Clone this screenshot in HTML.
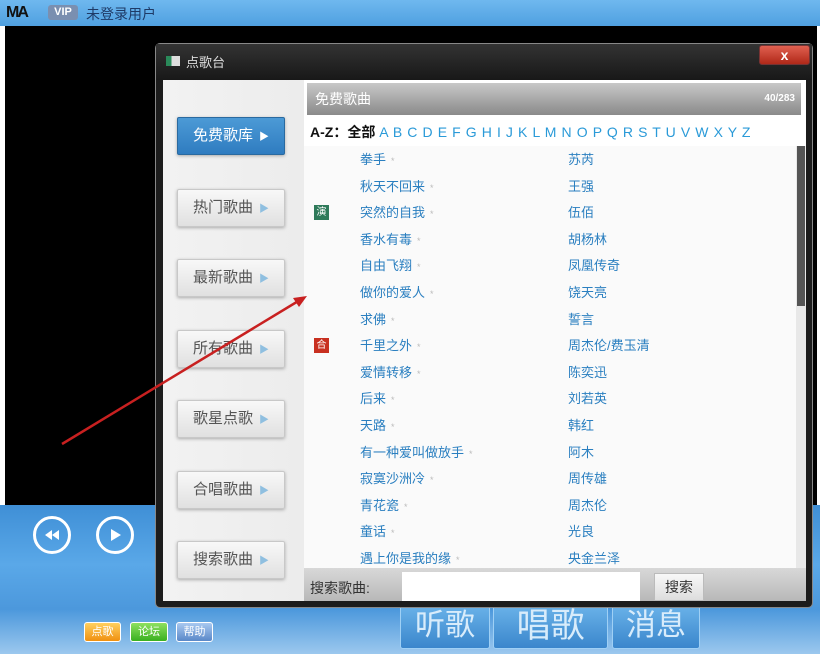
<!DOCTYPE html>
<html><head><meta charset="utf-8"><style>
*{margin:0;padding:0;box-sizing:border-box}
body{width:820px;height:654px;overflow:hidden;background:#fff;position:relative;font-family:"Liberation Sans","Noto Sans CJK SC",sans-serif}
.abs{position:absolute}
.top{left:0;top:0;width:820px;height:26px;background:linear-gradient(#6fb8ef,#4fa0e0)}
.black{left:5px;top:26px;width:812px;height:482px;background:#000}
.bot{left:0;top:505px;width:820px;height:149px;background:linear-gradient(#3f8fd6 0%,#5aa8e8 40%,#4c98dc 70%,#9cc8ee 100%)}
.dlg{left:155px;top:43px;width:658px;height:565px;background:#1c1c1c;border:1px solid #888;border-radius:5px}
.title{left:0;top:0;width:656px;height:36px;background:linear-gradient(#333,#181818)}
.content{left:7px;top:36px;width:643px;height:521px;background:#f5f5f5}
.btn{left:14px;width:108px;height:38px;background:linear-gradient(#f8f8f8,#e0e0e0);border:1px solid #c8c8c8;box-shadow:0 1px 3px #aaa;border-radius:2px;color:#555;font-size:15px;line-height:36px;text-align:center}
.btn span{color:#8fbfe0;font-size:10px;margin-left:6px}
.btn.on{background:linear-gradient(#4c9ad6,#2f7cc0);color:#fff;border-color:#2a6aa0}
.btn.on span{color:#fff}
.row{left:0;width:492px;height:27px;font-size:13px;color:#2a7fc0;line-height:27px}
.row .a{position:absolute;left:56px}
.row .b{position:absolute;left:264px}
.row i{color:#bbb;font-style:normal;font-size:9px;margin-left:5px}
.bb{top:603px;height:46px;background:linear-gradient(#6cb4ea,#3a86cc);border:1px solid #9fd0f5;border-radius:3px;color:#d8ecfb;font-size:30px;text-align:center;line-height:44px}
.circ{width:38px;height:38px;border:3px solid #fff;border-radius:50%;top:516px}
</style></head><body>
<div class="abs top"></div>
<div class="abs" style="left:6px;top:4px;font-size:16px;font-weight:bold;color:#111;letter-spacing:-2px">MA</div>
<div class="abs" style="left:48px;top:5px;width:30px;height:15px;background:#7a8fb0;border-radius:3px;color:#fff;font-size:11px;line-height:15px;text-align:center;font-weight:bold">VIP</div>
<div class="abs" style="left:86px;top:4px;font-size:14px;color:#1e3a66">未登录用户</div>
<div class="abs black"></div>
<div class="abs bot"></div>
<div class="abs circ" style="left:33px"><svg width="32" height="32" viewBox="0 0 32 32"><path d="M9 16l7-5v10zM16 16l7-5v10z" fill="#fff"/></svg></div>
<div class="abs circ" style="left:96px"><svg width="32" height="32" viewBox="0 0 32 32"><path d="M12 10l10 6-10 6z" fill="#fff"/></svg></div>
<div class="abs" style="left:84px;top:622px;width:37px;height:20px;background:linear-gradient(#ffd060,#f09010);border:1px solid #fff;border-radius:3px;color:#fff;font-size:11px;text-align:center;line-height:18px">点歌</div>
<div class="abs" style="left:130px;top:622px;width:38px;height:20px;background:linear-gradient(#8fe060,#3ab020);border:1px solid #fff;border-radius:3px;color:#fff;font-size:11px;text-align:center;line-height:18px">论坛</div>
<div class="abs" style="left:176px;top:622px;width:37px;height:20px;background:linear-gradient(#a8c8f0,#5a88c8);border:1px solid #fff;border-radius:3px;color:#fff;font-size:11px;text-align:center;line-height:18px">帮助</div>
<div class="abs bb" style="left:400px;width:90px">听歌</div>
<div class="abs bb" style="left:493px;width:115px;font-size:34px">唱歌</div>
<div class="abs bb" style="left:612px;width:88px">消息</div>
<div class="abs dlg">
 <div class="abs title"></div>
 <div class="abs" style="left:10px;top:12px;width:14px;height:10px;background:linear-gradient(90deg,#2a8a5a 40%,#ddd 40%)"></div>
 <div class="abs" style="left:30px;top:8px;color:#ddd;font-size:13px">点歌台</div>
 <div class="abs" style="left:603px;top:1px;width:51px;height:20px;background:linear-gradient(#e06050,#b02818);border:1px solid #733;border-radius:3px;color:#fff;text-align:center;font-size:14px;font-weight:bold;line-height:18px">x</div>
 <div class="abs content">
  <div class="abs" style="left:0;top:0;width:141px;height:521px;background:linear-gradient(90deg,#f2f2f2,#ececec)"></div>
  <div class="abs btn on" style="top:37px">免费歌库<span>▶</span></div>
  <div class="abs btn" style="top:109px">热门歌曲<span>▶</span></div>
  <div class="abs btn" style="top:179px">最新歌曲<span>▶</span></div>
  <div class="abs btn" style="top:250px">所有歌曲<span>▶</span></div>
  <div class="abs btn" style="top:320px">歌星点歌<span>▶</span></div>
  <div class="abs btn" style="top:391px">合唱歌曲<span>▶</span></div>
  <div class="abs btn" style="top:461px">搜索歌曲<span>▶</span></div>
  <div class="abs" style="left:141px;top:0;width:502px;height:521px;background:#fff">
   <div class="abs" style="left:3px;top:3px;width:494px;height:32px;background:linear-gradient(#c8c8c8,#8a8a8a);color:#fff;font-size:14px;line-height:32px;padding-left:8px">免费歌曲<span style="position:absolute;right:6px;font-size:10px;font-weight:bold">40/283</span></div>
   <div class="abs" style="left:6px;top:42px;font-size:14px;color:#111;font-weight:bold;white-space:nowrap">A-Z：全部 <span style="color:#2a9ad8;font-weight:normal;font-size:14px;letter-spacing:0.6px">A B C D E F G H I J K L M N O P Q R S T U V W X Y Z</span></div>
   <div class="abs" style="left:0;top:66px;width:492px;height:422px;background:#fafafa;overflow:hidden">
    <div class="abs row" style="top:0"><span class="a">拳手<i>*</i></span><span class="b">苏芮</span></div>
    <div class="abs row" style="top:26.6px"><span class="a">秋天不回来<i>*</i></span><span class="b">王强</span></div>
    <div class="abs row" style="top:53.2px"><span style="position:absolute;left:10px;top:6px;width:15px;height:15px;background:#2f7a5a;color:#fff;font-size:10px;line-height:15px;text-align:center">演</span><span class="a">突然的自我<i>*</i></span><span class="b">伍佰</span></div>
    <div class="abs row" style="top:79.8px"><span class="a">香水有毒<i>*</i></span><span class="b">胡杨林</span></div>
    <div class="abs row" style="top:106.4px"><span class="a">自由飞翔<i>*</i></span><span class="b">凤凰传奇</span></div>
    <div class="abs row" style="top:133px"><span class="a">做你的爱人<i>*</i></span><span class="b">饶天亮</span></div>
    <div class="abs row" style="top:159.6px"><span class="a">求佛<i>*</i></span><span class="b">誓言</span></div>
    <div class="abs row" style="top:186.2px"><span style="position:absolute;left:10px;top:6px;width:15px;height:15px;background:#c83020;color:#fff;font-size:10px;line-height:15px;text-align:center">合</span><span class="a">千里之外<i>*</i></span><span class="b">周杰伦/费玉清</span></div>
    <div class="abs row" style="top:212.8px"><span class="a">爱情转移<i>*</i></span><span class="b">陈奕迅</span></div>
    <div class="abs row" style="top:239.4px"><span class="a">后来<i>*</i></span><span class="b">刘若英</span></div>
    <div class="abs row" style="top:266px"><span class="a">天路<i>*</i></span><span class="b">韩红</span></div>
    <div class="abs row" style="top:292.6px"><span class="a">有一种爱叫做放手<i>*</i></span><span class="b">阿木</span></div>
    <div class="abs row" style="top:319.2px"><span class="a">寂寞沙洲冷<i>*</i></span><span class="b">周传雄</span></div>
    <div class="abs row" style="top:345.8px"><span class="a">青花瓷<i>*</i></span><span class="b">周杰伦</span></div>
    <div class="abs row" style="top:372.4px"><span class="a">童话<i>*</i></span><span class="b">光良</span></div>
    <div class="abs row" style="top:399px"><span class="a">遇上你是我的缘<i>*</i></span><span class="b">央金兰泽</span></div>
   </div>
   <div class="abs" style="left:492px;top:66px;width:10px;height:422px;background:#e8e8e8"></div>
   <div class="abs" style="left:493px;top:66px;width:8px;height:160px;background:#555"></div>
   <div class="abs" style="left:0;top:488px;width:502px;height:33px;background:linear-gradient(#d8d8d8,#b8b8b8)"></div>
   <div class="abs" style="left:6px;top:498px;font-size:14px;color:#333">搜索歌曲:</div>
   <div class="abs" style="left:98px;top:492px;width:238px;height:29px;background:#fff"></div>
   <div class="abs" style="left:350px;top:493px;width:50px;height:28px;background:linear-gradient(#f8f8f8,#ddd);border:1px solid #bbb;font-size:14px;text-align:center;line-height:26px;color:#333">搜索</div>
  </div>
 </div>
</div>
<svg class="abs" style="left:0;top:0" width="820" height="654"><line x1="62" y1="444" x2="300" y2="300" stroke="#c82020" stroke-width="2.5"/><path d="M307 296l-14 2 6 9z" fill="#c82020"/></svg>
</body></html>
